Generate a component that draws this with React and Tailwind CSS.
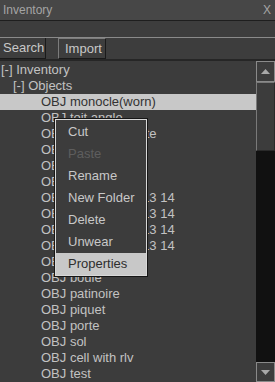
import React from 'react'

const rows = [
  { text: '[-] Inventory', pad: 'pl-[1px]' },
  { text: '[-] Objects', pad: 'pl-[13px]' },
  { text: 'OBJ monocle(worn)', pad: 'pl-[41px]', active: true },
  { text: 'OBJ toit angle', pad: 'pl-[41px]' },
  { text: 'OBJ toit angle limite', pad: 'pl-[41px]' },
  { text: 'OBJ chaise', pad: 'pl-[41px]' },
  { text: 'OBJ table', pad: 'pl-[41px]' },
  { text: 'OBJ lampe', pad: 'pl-[41px]' },
  { text: 'OBJ Nouvel item 13 14', pad: 'pl-[41px]' },
  { text: 'OBJ Nouvel item 13 14', pad: 'pl-[41px]' },
  { text: 'OBJ Nouvel item 13 14', pad: 'pl-[41px]' },
  { text: 'OBJ Nouvel item 13 14', pad: 'pl-[41px]' },
  { text: 'OBJ banc', pad: 'pl-[41px]' },
  { text: 'OBJ boule', pad: 'pl-[41px]' },
  { text: 'OBJ patinoire', pad: 'pl-[41px]' },
  { text: 'OBJ piquet', pad: 'pl-[41px]' },
  { text: 'OBJ porte', pad: 'pl-[41px]' },
  { text: 'OBJ sol', pad: 'pl-[41px]' },
  { text: 'OBJ cell with rlv', pad: 'pl-[41px]' },
  { text: 'OBJ test', pad: 'pl-[41px]' },
]

const menuItems = [
  { label: 'Cut' },
  { label: 'Paste', disabled: true },
  { label: 'Rename' },
  { label: 'New Folder' },
  { label: 'Delete' },
  { label: 'Unwear' },
  { label: 'Properties', active: true },
]

const Arrow = ({ down }) => (
  <svg width="9" height="5" viewBox="0 0 9 5" className={down ? 'rotate-180' : ''}>
    <polygon points="4.5,0 9,5 0,5" fill="#a8a8a8" />
  </svg>
)

export default function App() {
  return (
    <div
      className="relative w-[275px] h-[382px] overflow-hidden bg-[#3c3c3c] text-[13px] leading-[16px] text-[#c2c2c2] flex flex-col"
      style={{ fontFamily: '"Liberation Sans", Arial, sans-serif' }}
    >
      {/* Title bar */}
      <div className="h-[20px] bg-[#474747] flex items-center justify-between pl-[3px] pr-[4px] text-[#a4a4a4] text-[12px]">
        <span>Inventory</span>
        <span>X</span>
      </div>
      <div className="h-[1px] bg-[#1e1e1e]" />
      {/* Filter band */}
      <div className="h-[16px] bg-[#3d3d3d]" />
      <div className="h-[1px] bg-[#8a8a8a]" />

      {/* Tabs */}
      <div className="h-[21px] flex bg-[#3d3d3d]">
        <div className="w-[46px] h-full border-r border-b border-[#1a1a1a] pl-[3px] flex items-center text-[#c8c8c8]">
          Search
        </div>
        <div className="ml-[12px] w-[48px] h-full border-l border-t border-[#7c7c7c] border-r-[#1a1a1a] border-b-[#1a1a1a] border-r border-b pl-[6px] flex items-center text-[#c8c8c8]">
          Import
        </div>
      </div>
      <div className="h-[2px] bg-[#262626]" />

      {/* Tree + scrollbar */}
      <div className="flex-1 flex min-h-0">
        <div className="flex-1 pt-[1px] overflow-hidden">
          {rows.map((r, i) => (
            <div
              key={i}
              className={`h-[16px] whitespace-nowrap ${r.pad} ${r.active ? 'bg-[#c8c8c8] text-[#333333]' : ''}`}
            >
              {r.text}
            </div>
          ))}
        </div>
        <div className="w-[19px] flex flex-col bg-[#111111]">
          <div className="h-[21px] bg-[#3c3c3c] border border-[#8a8a8a] flex items-center justify-center">
            <Arrow />
          </div>
          <div className="h-[69px] bg-[#3c3c3c] border-l border-t border-[#7a7a7a] border-r border-r-[#2a2a2a] border-b border-b-[#2a2a2a]" />
          <div className="flex-1" />
          <div className="h-[20px] bg-[#3c3c3c] border border-[#8a8a8a] flex items-center justify-center">
            <Arrow down />
          </div>
        </div>
      </div>

      {/* Context menu */}
      <div className="absolute left-[55px] top-[119px] w-[92px] border border-[#d8d8d8] shadow-[0_0_0_1px_#161616] bg-[#3c3c3c] pt-[1px]">
        {menuItems.map((m) => (
          <div
            key={m.label}
            className={`h-[22px] flex items-center pl-[12px] whitespace-nowrap ${
              m.active ? 'bg-[#c8c8c8] text-[#2e2e2e]' : m.disabled ? 'text-[#5e5e5e]' : 'text-[#c8c8c8]'
            }`}
          >
            {m.label}
          </div>
        ))}
      </div>
    </div>
  )
}
